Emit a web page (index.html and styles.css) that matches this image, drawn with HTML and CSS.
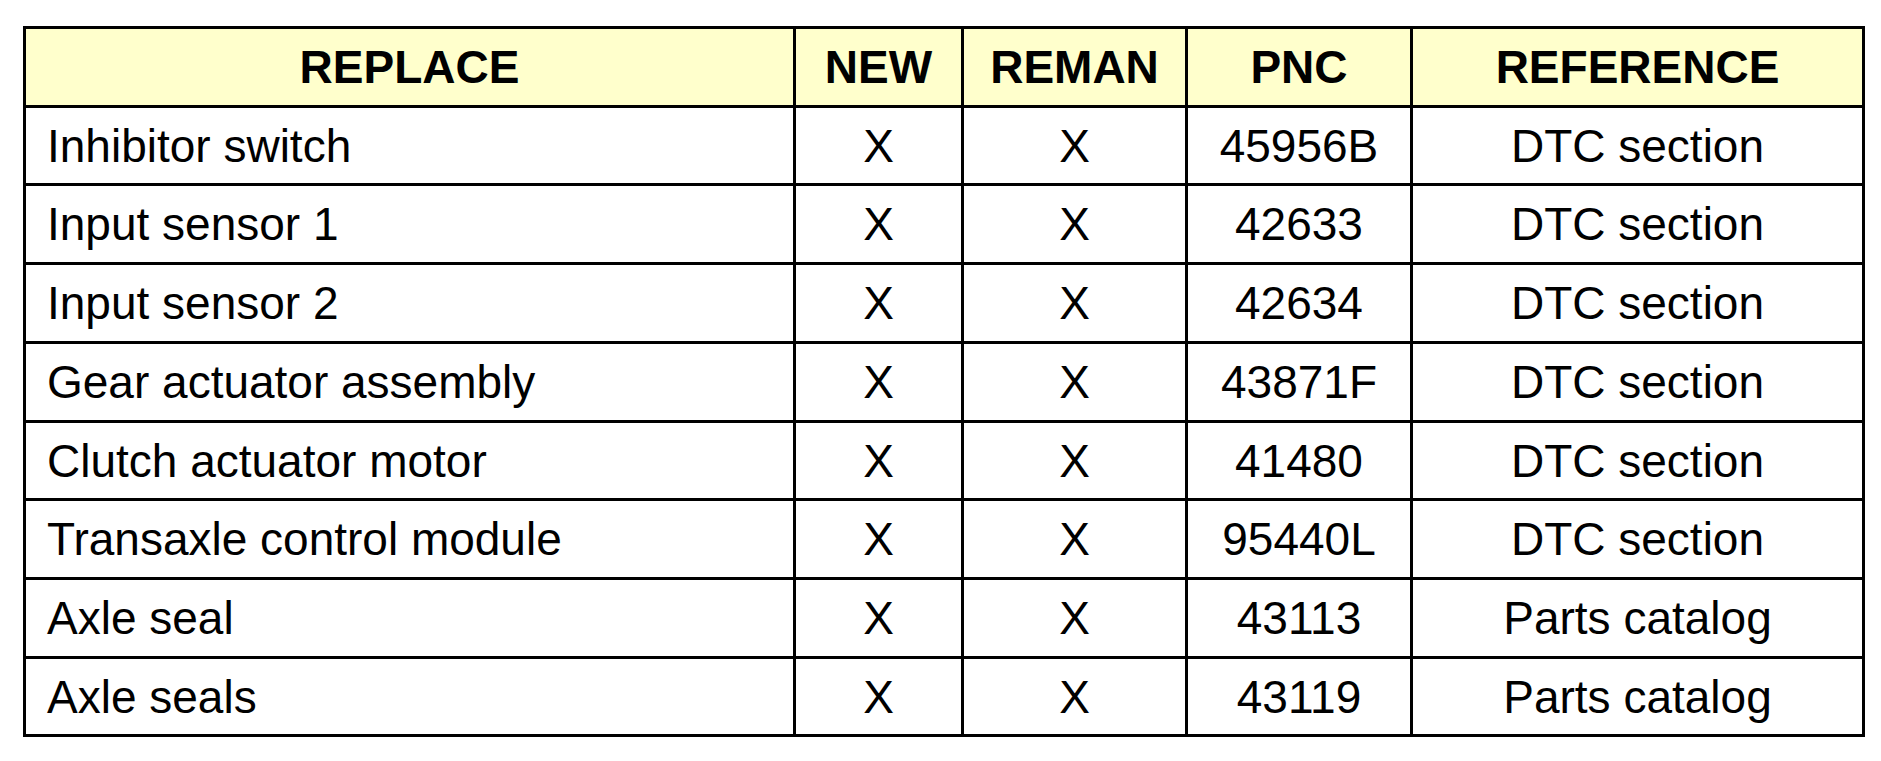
FILE: index.html
```html
<!DOCTYPE html>
<html lang="en">
<head>
<meta charset="utf-8">
<title>Replacement parts</title>
<link rel="stylesheet" href="styles.css">
</head>
<body>
<div class="parts" role="table">
  <div class="cell head">REPLACE</div>
  <div class="cell head">NEW</div>
  <div class="cell head">REMAN</div>
  <div class="cell head">PNC</div>
  <div class="cell head">REFERENCE</div>

  <div class="cell name">Inhibitor switch</div>
  <div class="cell">X</div>
  <div class="cell">X</div>
  <div class="cell">45956B</div>
  <div class="cell">DTC section</div>

  <div class="cell name">Input sensor 1</div>
  <div class="cell">X</div>
  <div class="cell">X</div>
  <div class="cell">42633</div>
  <div class="cell">DTC section</div>

  <div class="cell name">Input sensor 2</div>
  <div class="cell">X</div>
  <div class="cell">X</div>
  <div class="cell">42634</div>
  <div class="cell">DTC section</div>

  <div class="cell name">Gear actuator assembly</div>
  <div class="cell">X</div>
  <div class="cell">X</div>
  <div class="cell">43871F</div>
  <div class="cell">DTC section</div>

  <div class="cell name">Clutch actuator motor</div>
  <div class="cell">X</div>
  <div class="cell">X</div>
  <div class="cell">41480</div>
  <div class="cell">DTC section</div>

  <div class="cell name">Transaxle control module</div>
  <div class="cell">X</div>
  <div class="cell">X</div>
  <div class="cell">95440L</div>
  <div class="cell">DTC section</div>

  <div class="cell name">Axle seal</div>
  <div class="cell">X</div>
  <div class="cell">X</div>
  <div class="cell">43113</div>
  <div class="cell">Parts catalog</div>

  <div class="cell name">Axle seals</div>
  <div class="cell">X</div>
  <div class="cell">X</div>
  <div class="cell">43119</div>
  <div class="cell">Parts catalog</div>
</div>
</body>
</html>
```

FILE: styles.css
```css
html, body {
  margin: 0;
  padding: 0;
  background: #ffffff;
}

body {
  padding: 26px 0 0 23px;
  font-family: "Liberation Sans", Arial, sans-serif;
  color: #000000;
}

.parts {
  display: grid;
  width: max-content;
  grid-template-columns: 767px 165px 221px 222px 449px;
  grid-template-rows: 76px 75px 76px 76px 76px 75px 76px 76px 75px;
  gap: 3px;
  padding: 3px;
  background: #000000;
}

.cell {
  display: flex;
  align-items: center;
  justify-content: center;
  background: #ffffff;
  font-size: 46px;
  line-height: 1;
  white-space: nowrap;
}

.cell.head {
  background: #ffffcc;
  font-weight: 700;
}

.cell.name {
  justify-content: flex-start;
  padding-left: 21px;
}
```
